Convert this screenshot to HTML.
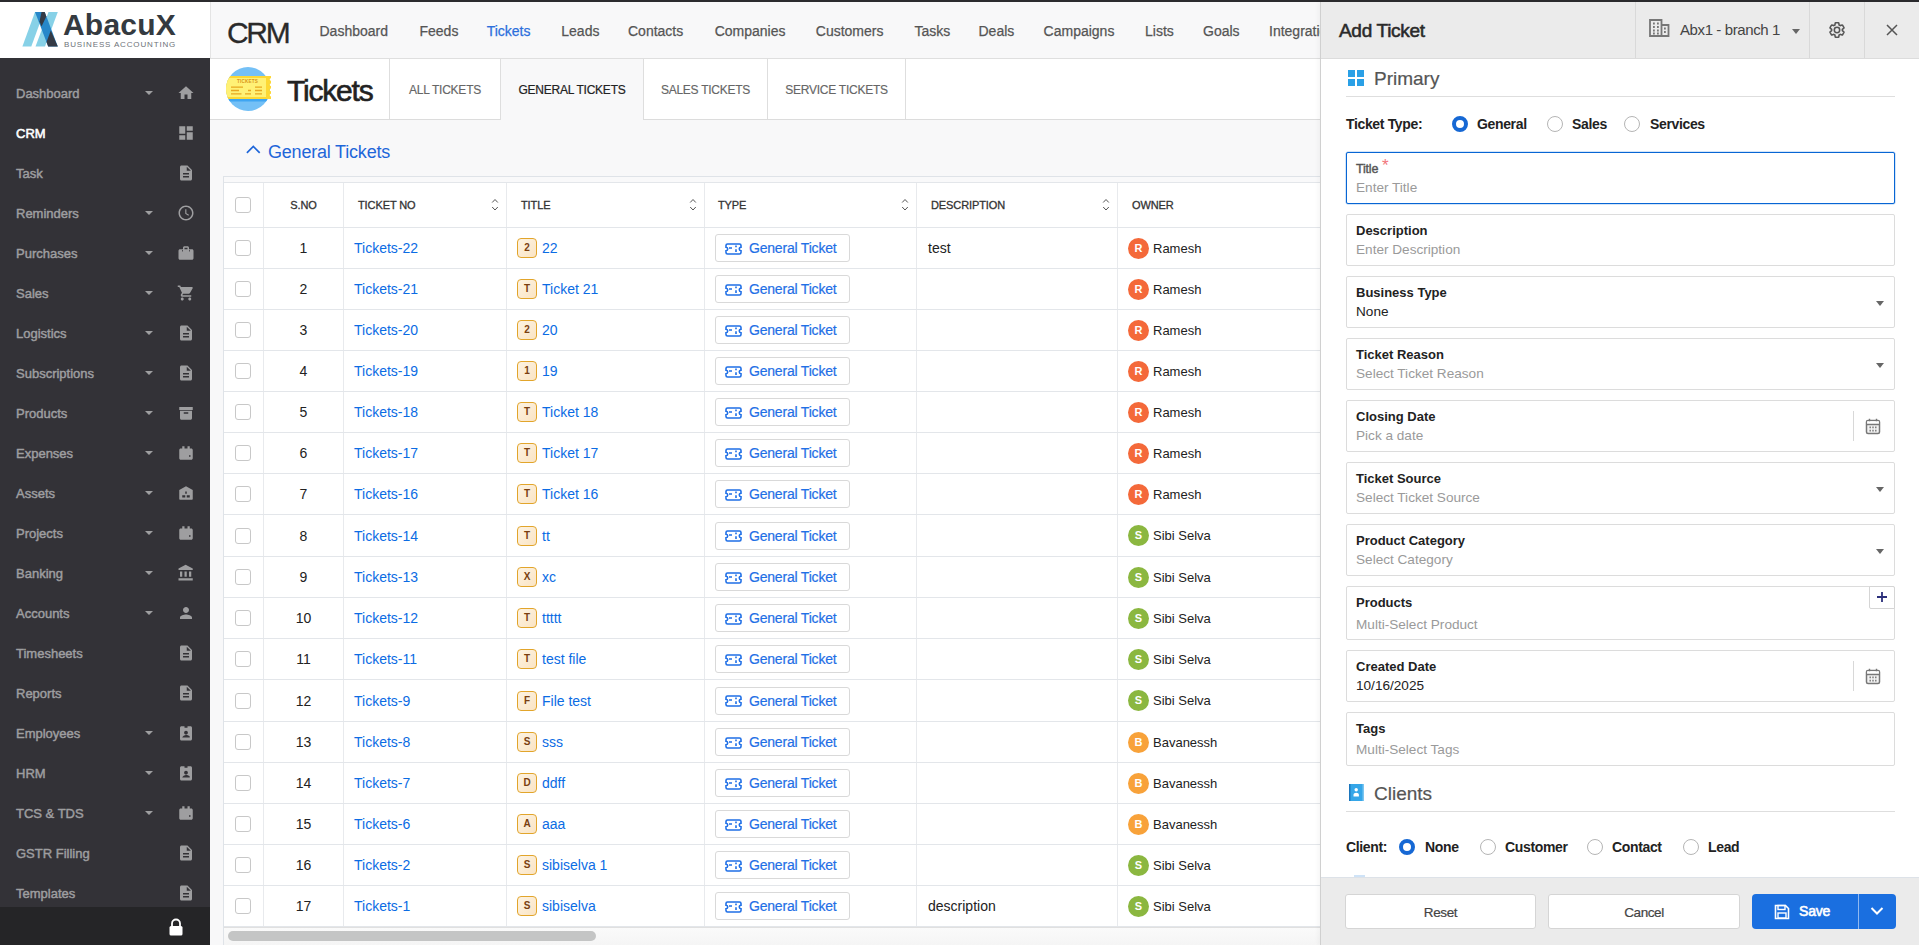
<!DOCTYPE html>
<html><head><meta charset="utf-8">
<style>
*{box-sizing:border-box;margin:0;padding:0}
html,body{width:1919px;height:945px;overflow:hidden;font-family:"Liberation Sans",sans-serif;background:#f8f8f9;color:#222;position:relative}
i{font-style:normal}
.a{position:absolute}
#topbar{left:0;top:0;width:1919px;height:2px;background:#2b2b2e}
#logo{left:0;top:2px;width:210px;height:56px;background:#fff}
#side{left:0;top:58px;width:210px;height:849px;background:#333237}
#sidefoot{left:0;top:907px;width:210px;height:38px;background:#252527}
.si{position:absolute;left:16px;height:20px;width:180px;font-size:13px;color:#9e9ea0;letter-spacing:0px;-webkit-text-stroke:0.45px #9e9ea0}
.si.act{color:#fff;-webkit-text-stroke:0.55px #fff}
.si .t{position:absolute;left:0;top:3px;line-height:15px}
.si .car{position:absolute;left:129px;top:8px;width:0;height:0;border-left:4px solid transparent;border-right:4px solid transparent;border-top:4px solid #9e9ea0}
.si svg{position:absolute;left:161px;top:1px;width:18px;height:18px;fill:#9e9ea0}
#nav{left:210px;top:2px;width:1110px;height:57px;background:#f8f8f9;border-bottom:1px solid #dfdfdf;box-shadow:inset 1px 0 0 #e4e4e4}
#nav .crm{position:absolute;left:17px;top:15px;font-size:30px;letter-spacing:-2.3px;color:#2a2a2a;line-height:32px;-webkit-text-stroke:0.3px #2a2a2a}
#nav .ni{position:absolute;top:21px;font-size:14px;color:#555;line-height:16px;white-space:nowrap;-webkit-text-stroke:0.25px #555}
#nav .ni.on{color:#2c6fdc;-webkit-text-stroke:0.25px #2c6fdc}
#phead{left:210px;top:59px;width:1110px;height:61px;background:#fff;border-bottom:1px solid #dcdcdc}
#phead .ttl{position:absolute;left:77px;top:15px;font-size:30px;color:#222;line-height:34px;letter-spacing:-1.2px;-webkit-text-stroke:0.6px #222}
#phead .tab{position:absolute;top:0;height:60px;border-left:1px solid #dedede;font-size:12px;color:#666;line-height:63px;text-align:center;letter-spacing:-0.25px;-webkit-text-stroke:0.15px #666}
#phead .tab.on{background:#f8f8f9;height:61px;color:#222;-webkit-text-stroke:0.2px #222}
#gt{left:246px;top:142px;font-size:18px;letter-spacing:-0.2px;color:#1e66d9;line-height:20px}
#gt svg{position:absolute;left:0;top:2px}
#gt span{position:absolute;left:22px;top:0;white-space:nowrap}
#tbl{left:223px;top:176px;width:1100px;height:775px;background:#fff;border:1px solid #dfe3e8;border-right:none;overflow:hidden}
#tbl .strip{position:absolute;left:0;top:0;width:100%;height:6px;background:#f9f9fa;border-bottom:1px solid #e3e6ea}
.th{position:absolute;left:0;top:6px;height:45px;width:1100px;border-bottom:1px solid #e3e6ea;font-size:11px;color:#333;letter-spacing:-0.1px;-webkit-text-stroke:0.3px #333}
.tr{position:absolute;left:0;width:1100px;height:41.12px;border-bottom:1px solid #e3e6ea;font-size:14px;color:#222}
.th>div,.tr>div{position:absolute;top:0;height:100%;border-right:1px solid #e8eaed;display:flex;align-items:center}
.c0{left:0;width:40px;padding-left:11px}
.c1{left:40px;width:80px;justify-content:center}
.c2{left:120px;width:163px;padding-left:10px}
.c3{left:283px;width:198px;padding-left:10px}
.c4{left:481px;width:212px;padding-left:10px}
.c5{left:693px;width:201px;padding-left:11px}
.c6{left:894px;width:300px;padding-left:9px;border-right:none!important}
.th .c2,.th .c3,.th .c4,.th .c5,.th .c6{padding-left:14px}
.th .c4{padding-left:13px}
.cb{display:block;width:16px;height:16px;border:1.3px solid #c8c8c8;border-radius:3px;background:#fff}
.tr .c2{color:#0b6ce4}
.tr .c3{color:#0b6ce4}
.bdg{display:inline-block;width:20px;height:20px;border:1.5px solid #e2a52b;border-radius:4px;background:linear-gradient(135deg,#fdf3e3,#fae4c4);color:#7a3f10;font-size:10px;font-weight:bold;text-align:center;line-height:17px;margin-right:5px}
.chip{display:inline-flex;align-items:center;height:28px;width:135px;border:1px solid #d9d9d9;border-radius:3px;padding-left:9px;color:#1f6fe6;font-size:14px;letter-spacing:-0.2px;-webkit-text-stroke:0.2px #1f6fe6}
.chip svg{width:17px;height:12px;margin-right:7px;margin-top:1px}
.av{display:inline-block;width:21px;height:21px;border-radius:50%;color:#fff;font-size:11px;font-weight:bold;text-align:center;line-height:21px;margin-right:4px;margin-left:1px}
.tr .c6{font-size:13px}
.sort{position:absolute;right:7px;top:15px;width:8px;height:14px}
#hscroll{left:228px;top:931px;width:368px;height:10px;border-radius:5px;background:#c4c5c5}
/* panel */
#panel{left:1320px;top:2px;width:599px;height:943px;background:#fff;border-left:1px solid #d0d0d0;box-shadow:-2px 0 4px rgba(0,0,0,0.04)}
#phd{left:0;top:0;width:599px;height:57px;background:#ebebeb;border-bottom:1px solid #dcdcdc}
#phd .at{position:absolute;left:18px;top:19px;font-size:19px;color:#2a2a2a;letter-spacing:-0.3px;line-height:20px;-webkit-text-stroke:0.55px #2a2a2a}
#phd .dv{position:absolute;top:0;width:1px;height:56px;background:#d9d9d9}
#phd .br{position:absolute;left:359px;top:19px;font-size:15px;color:#444;line-height:18px;white-space:nowrap;letter-spacing:-0.4px}
.sec{position:absolute;left:25px;width:549px;height:40px;border-bottom:1px solid #dedede}
.sec span{position:absolute;left:28px;top:11px;font-size:19px;color:#555;line-height:22px;-webkit-text-stroke:0.2px #555}
.rl{position:absolute;font-size:14px;font-weight:bold;color:#222;line-height:16px;white-space:nowrap;letter-spacing:-0.35px}
.rd{position:absolute;width:16px;height:16px;border-radius:50%;border:1px solid #b5b5b5;background:#fff;margin-top:1px}
.rd.on{border:4.6px solid #1668d4}
.fld{position:absolute;left:25px;width:549px;height:52px;border:1px solid #dcdcdc;border-radius:2px;background:#fff}
.fld .lb{position:absolute;left:9px;top:8px;font-size:13px;font-weight:bold;color:#222;line-height:15px;white-space:nowrap}
.fld .ph{position:absolute;left:9px;top:27px;font-size:13.6px;color:#9a9a9a;line-height:16px;white-space:nowrap}
.fld .vl{color:#222}
.fld .dd{position:absolute;right:10px;top:24px;width:0;height:0;border-left:4.5px solid transparent;border-right:4.5px solid transparent;border-top:5px solid #666}
.fld .cal{position:absolute;right:0;top:0;width:41px;height:50px;border-left:none}
.fld .cal:before{content:"";position:absolute;left:0;top:10px;width:1px;height:30px;background:#d8d8d8}
#pfoot{left:0;top:875px;width:599px;height:68px;background:#ebebeb;border-top:1px solid #dde2e8}
.btn{position:absolute;top:16px;height:35px;background:#fff;border:1px solid #d5d5d5;border-radius:3px;font-size:13.5px;color:#444;text-align:center;line-height:35px;letter-spacing:-0.4px;-webkit-text-stroke:0.2px #444}

</style></head><body>
<div id="topbar" class="a"></div>
<div id="logo" class="a">
<svg class="a" style="left:18px;top:6px" width="50" height="44" viewBox="0 0 50 44">
<polygon points="4.4,38.6 13.3,38.6 25.9,4 17,4" fill="#87d1e7"/>
<polygon points="17.5,38.6 27,38.6 39.8,4 30.5,4" fill="#87d1e7"/>
<polygon points="17,4 26.7,4 39.8,38.6 30.2,38.6" fill="#2787c9"/>
<polygon points="23.5,4 26.7,4 28.3,8.5 23.5,18.5 21.5,13.5" fill="#343a45"/>
<polygon points="32.8,22.5 39.8,38.6 30.2,38.6 28.5,34" fill="#343a45"/>
</svg>
<div class="a" style="left:63px;top:6px;font-size:30px;font-weight:bold;color:#343a40;letter-spacing:0.2px;line-height:34px">AbacuX</div>
<div class="a" style="left:64px;top:38px;font-size:8px;color:#6d7278;letter-spacing:0.85px;line-height:10px;white-space:nowrap">BUSINESS ACCOUNTING</div>
</div>
<div id="side" class="a"></div>
<div id="sidelist" class="a" style="left:0;top:0">
<div class="si" style="top:83px"><span class="t">Dashboard</span><i class="car"></i><svg viewBox="0 0 24 24"><path d="M10 20v-6h4v6h5v-8h3L12 3 2 12h3v8z"/></svg></div>
<div class="si act" style="top:123px"><span class="t">CRM</span><svg viewBox="0 0 24 24"><path d="M3 13h8V3H3v10zm0 8h8v-6H3v6zm10 0h8V11h-8v10zm0-18v6h8V3h-8z"/></svg></div>
<div class="si" style="top:163px"><span class="t">Task</span><svg viewBox="0 0 24 24"><path d="M14 2H6c-1.1 0-2 .9-2 2v16c0 1.1.9 2 2 2h12c1.1 0 2-.9 2-2V8l-6-6zm2 16H8v-2h8v2zm0-4H8v-2h8v2zm-3-5V3.5L18.5 9H13z"/></svg></div>
<div class="si" style="top:203px"><span class="t">Reminders</span><i class="car"></i><svg viewBox="0 0 24 24"><path d="M12 2C6.5 2 2 6.5 2 12s4.5 10 10 10 10-4.5 10-10S17.5 2 12 2zm0 18c-4.4 0-8-3.6-8-8s3.6-8 8-8 8 3.6 8 8-3.6 8-8 8zm.5-13H11v6l4.2 2.6.8-1.3-3.5-2.1z"/></svg></div>
<div class="si" style="top:243px"><span class="t">Purchases</span><i class="car"></i><svg viewBox="0 0 24 24"><path d="M20 7h-4V5c0-1.1-.9-2-2-2h-4c-1.1 0-2 .9-2 2v2H4c-1.1 0-2 .9-2 2v10c0 1.1.9 2 2 2h16c1.1 0 2-.9 2-2V9c0-1.1-.9-2-2-2zM10 5h4v2h-4V5zm-2 5H7V8h1v2zm9 0h-1V8h1v2z"/></svg></div>
<div class="si" style="top:283px"><span class="t">Sales</span><i class="car"></i><svg viewBox="0 0 24 24"><path d="M7 18c-1.1 0-2 .9-2 2s.9 2 2 2 2-.9 2-2-.9-2-2-2zM1 2v2h2l3.6 7.6-1.4 2.4c-.2.3-.2.6-.2 1 0 1.1.9 2 2 2h12v-2H7.4c-.1 0-.2-.1-.2-.2v-.1l.9-1.7h7.5c.7 0 1.4-.4 1.7-1l3.6-6.5c.1-.2.1-.3.1-.5 0-.6-.4-1-1-1H5.2l-.9-2H1zm16 16c-1.1 0-2 .9-2 2s.9 2 2 2 2-.9 2-2-.9-2-2-2z"/></svg></div>
<div class="si" style="top:323px"><span class="t">Logistics</span><i class="car"></i><svg viewBox="0 0 24 24"><path d="M14 2H6c-1.1 0-2 .9-2 2v16c0 1.1.9 2 2 2h12c1.1 0 2-.9 2-2V8l-6-6zm2 16H8v-2h8v2zm0-4H8v-2h8v2zm-3-5V3.5L18.5 9H13z"/></svg></div>
<div class="si" style="top:363px"><span class="t">Subscriptions</span><i class="car"></i><svg viewBox="0 0 24 24"><path d="M14 2H6c-1.1 0-2 .9-2 2v16c0 1.1.9 2 2 2h12c1.1 0 2-.9 2-2V8l-6-6zm2 16H8v-2h8v2zm0-4H8v-2h8v2zm-3-5V3.5L18.5 9H13z"/></svg></div>
<div class="si" style="top:403px"><span class="t">Products</span><i class="car"></i><svg viewBox="0 0 24 24"><path d="M3 4h18v4H3zM4 9h16v10c0 1.1-.9 2-2 2H6c-1.1 0-2-.9-2-2V9zm5 2v2h6v-2H9z" fill-rule="evenodd"/></svg></div>
<div class="si" style="top:443px"><span class="t">Expenses</span><i class="car"></i><svg viewBox="0 0 24 24"><path d="M5 6h2V3h3v3h4V3h3v3h2c1.1 0 2 .9 2 2v11c0 1.1-.9 2-2 2H5c-1.1 0-2-.9-2-2V8c0-1.1.9-2 2-2zm11 9v2h2v-2h-2z"/></svg></div>
<div class="si" style="top:483px"><span class="t">Assets</span><i class="car"></i><svg viewBox="0 0 24 24"><path d="M12 3l9 5v12c0 .6-.4 1-1 1H4c-.6 0-1-.4-1-1V8l9-5zm-1 7v3h2v-3h-2zm-4 5v3h4v-3H7zm6 0v3h4v-3h-4z"/></svg></div>
<div class="si" style="top:523px"><span class="t">Projects</span><i class="car"></i><svg viewBox="0 0 24 24"><path d="M5 6h2V3h3v3h4V3h3v3h2c1.1 0 2 .9 2 2v11c0 1.1-.9 2-2 2H5c-1.1 0-2-.9-2-2V8c0-1.1.9-2 2-2zm11 9v2h2v-2h-2z"/></svg></div>
<div class="si" style="top:563px"><span class="t">Banking</span><i class="car"></i><svg viewBox="0 0 24 24"><path d="M4 10v7h3v-7H4zm6 0v7h3v-7h-3zM2 22h19v-3H2v3zm14-12v7h3v-7h-3zm-4.5-9L2 6v2h19V6l-9.5-5z"/></svg></div>
<div class="si" style="top:603px"><span class="t">Accounts</span><i class="car"></i><svg viewBox="0 0 24 24"><path d="M12 12c2.2 0 4-1.8 4-4s-1.8-4-4-4-4 1.8-4 4 1.8 4 4 4zm0 2c-2.7 0-8 1.3-8 4v2h16v-2c0-2.7-5.3-4-8-4z"/></svg></div>
<div class="si" style="top:643px"><span class="t">Timesheets</span><svg viewBox="0 0 24 24"><path d="M14 2H6c-1.1 0-2 .9-2 2v16c0 1.1.9 2 2 2h12c1.1 0 2-.9 2-2V8l-6-6zm2 16H8v-2h8v2zm0-4H8v-2h8v2zm-3-5V3.5L18.5 9H13z"/></svg></div>
<div class="si" style="top:683px"><span class="t">Reports</span><svg viewBox="0 0 24 24"><path d="M14 2H6c-1.1 0-2 .9-2 2v16c0 1.1.9 2 2 2h12c1.1 0 2-.9 2-2V8l-6-6zm2 16H8v-2h8v2zm0-4H8v-2h8v2zm-3-5V3.5L18.5 9H13z"/></svg></div>
<div class="si" style="top:723px"><span class="t">Employees</span><i class="car"></i><svg viewBox="0 0 24 24"><path d="M6 3h4v2h4V3h4c1.1 0 2 .9 2 2v15c0 1.1-.9 2-2 2H6c-1.1 0-2-.9-2-2V5c0-1.1.9-2 2-2zm6 6c-1.4 0-2.5 1.1-2.5 2.5S10.6 14 12 14s2.5-1.1 2.5-2.5S13.4 9 12 9zm-5 9h10v-1c0-1.7-3.3-2.5-5-2.5S7 16.3 7 18v1z"/></svg></div>
<div class="si" style="top:763px"><span class="t">HRM</span><i class="car"></i><svg viewBox="0 0 24 24"><path d="M6 3h4v2h4V3h4c1.1 0 2 .9 2 2v15c0 1.1-.9 2-2 2H6c-1.1 0-2-.9-2-2V5c0-1.1.9-2 2-2zm6 6c-1.4 0-2.5 1.1-2.5 2.5S10.6 14 12 14s2.5-1.1 2.5-2.5S13.4 9 12 9zm-5 9h10v-1c0-1.7-3.3-2.5-5-2.5S7 16.3 7 18v1z"/></svg></div>
<div class="si" style="top:803px"><span class="t">TCS &amp; TDS</span><i class="car"></i><svg viewBox="0 0 24 24"><path d="M5 6h2V3h3v3h4V3h3v3h2c1.1 0 2 .9 2 2v11c0 1.1-.9 2-2 2H5c-1.1 0-2-.9-2-2V8c0-1.1.9-2 2-2zm11 9v2h2v-2h-2z"/></svg></div>
<div class="si" style="top:843px"><span class="t">GSTR Filling</span><svg viewBox="0 0 24 24"><path d="M14 2H6c-1.1 0-2 .9-2 2v16c0 1.1.9 2 2 2h12c1.1 0 2-.9 2-2V8l-6-6zm2 16H8v-2h8v2zm0-4H8v-2h8v2zm-3-5V3.5L18.5 9H13z"/></svg></div>
<div class="si" style="top:883px"><span class="t">Templates</span><svg viewBox="0 0 24 24"><path d="M14 2H6c-1.1 0-2 .9-2 2v16c0 1.1.9 2 2 2h12c1.1 0 2-.9 2-2V8l-6-6zm2 16H8v-2h8v2zm0-4H8v-2h8v2zm-3-5V3.5L18.5 9H13z"/></svg></div>
</div>
<div id="sidefoot" class="a"><svg class="a" style="left:168px;top:11px" width="16" height="18" viewBox="0 0 16 18"><path d="M4 8V5.5a4 4 0 0 1 8 0V8" fill="none" stroke="#fff" stroke-width="1.8"/><rect x="1.5" y="8" width="13" height="9.5" rx="1.5" fill="#fff"/></svg></div>

<div id="nav" class="a">
<div class="crm">CRM</div>
<div class="ni" style="left:109.5px">Dashboard</div>
<div class="ni" style="left:209.5px">Feeds</div>
<div class="ni on" style="left:276.7px">Tickets</div>
<div class="ni" style="left:351.3px">Leads</div>
<div class="ni" style="left:418px">Contacts</div>
<div class="ni" style="left:504.7px">Companies</div>
<div class="ni" style="left:605.8px">Customers</div>
<div class="ni" style="left:704.5px">Tasks</div>
<div class="ni" style="left:768.5px">Deals</div>
<div class="ni" style="left:833.6px">Campaigns</div>
<div class="ni" style="left:935px">Lists</div>
<div class="ni" style="left:993px">Goals</div>
<div class="ni" style="left:1059px">Integrations</div>
</div>

<div id="phead" class="a">
<svg class="a" style="left:12px;top:4px" width="54" height="52" viewBox="0 0 54 52">
<defs><clipPath id="cc"><circle cx="26" cy="26" r="22"/></clipPath><clipPath id="tc"><path d="M0 0h26v52H0z"/><circle cx="26" cy="26" r="22"/></clipPath></defs>
<circle cx="26" cy="26" r="22" fill="#74c0f6"/>
<rect x="0" y="35.5" width="54" height="3" fill="#3fa5f2" clip-path="url(#cc)"/>
<g clip-path="url(#cc)"><rect x="0" y="13" width="30" height="23" fill="#fdd835"/><rect x="0" y="15" width="30" height="19" fill="#fff176"/></g>
<path d="M26 13h23v2.2a1.3 1.3 0 0 0 0 2.6v2.6a1.3 1.3 0 0 0 0 2.6v2.6a1.3 1.3 0 0 0 0 2.6v2.6a1.3 1.3 0 0 0 0 2.6V36H26z" fill="#fdd835"/>
<path d="M26 15h18v19H26z" fill="#fff176"/>
<text x="25.5" y="19.8" font-size="4.6" font-weight="bold" fill="#d9941a" text-anchor="middle" font-family="Liberation Sans" letter-spacing="0.2">TICKETS</text>
<path d="M9 24.2h12M9 27.5h8M9 30.9h10.5M33 24.2h7M33 27.5h7M26 27.5h3M23 30.9h6M33 30.9h7" stroke="#e8a820" stroke-width="1.3"/>
</svg>
<div class="ttl">Tickets</div>
<div class="tab" style="left:179px;width:111px">ALL TICKETS</div>
<div class="tab on" style="left:290px;width:143px">GENERAL TICKETS</div>
<div class="tab" style="left:433px;width:124px">SALES TICKETS</div>
<div class="tab" style="left:557px;width:139px;border-right:1px solid #dedede">SERVICE TICKETS</div>
</div>

<div id="gt" class="a"><svg width="16" height="12" viewBox="0 0 16 12"><path d="M0.9 8.8L7.3 2.4l6.4 6.4" fill="none" stroke="#1e66d9" stroke-width="1.7"/></svg><span>General Tickets</span></div>

<div id="tbl" class="a">
<div class="strip"></div>
<div class="th">
<div class="c0"><i class="cb"></i></div>
<div class="c1">S.NO</div>
<div class="c2">TICKET NO<svg class="sort" viewBox="0 0 8 14"><path d="M1.2 4.5l2.8-3 2.8 3M1.2 9l2.8 3 2.8-3" fill="none" stroke="#555" stroke-width="1"/></svg></div>
<div class="c3">TITLE<svg class="sort" viewBox="0 0 8 14"><path d="M1.2 4.5l2.8-3 2.8 3M1.2 9l2.8 3 2.8-3" fill="none" stroke="#555" stroke-width="1"/></svg></div>
<div class="c4">TYPE<svg class="sort" viewBox="0 0 8 14"><path d="M1.2 4.5l2.8-3 2.8 3M1.2 9l2.8 3 2.8-3" fill="none" stroke="#555" stroke-width="1"/></svg></div>
<div class="c5">DESCRIPTION<svg class="sort" viewBox="0 0 8 14"><path d="M1.2 4.5l2.8-3 2.8 3M1.2 9l2.8 3 2.8-3" fill="none" stroke="#555" stroke-width="1"/></svg></div>
<div class="c6">OWNER</div>
</div>
<div class="tr" style="top:51px;height:41px"><div class="c0"><i class="cb"></i></div><div class="c1">1</div><div class="c2">Tickets-22</div><div class="c3"><i class="bdg">2</i>22</div><div class="c4"><span class="chip"><svg viewBox="0 0 17 12"><path d="M2.5 1H14.5A1.5 1.5 0 0 1 16 2.5V4.3A1.7 1.7 0 0 0 16 7.7V9.5A1.5 1.5 0 0 1 14.5 11H2.5A1.5 1.5 0 0 1 1 9.5V7.7A1.7 1.7 0 0 0 1 4.3V2.5A1.5 1.5 0 0 1 2.5 1Z" fill="none" stroke="#1f6fe6" stroke-width="1.6"/><path d="M4 5h3M11 2.5v1.7M11 6.3v2.7" stroke="#1f6fe6" stroke-width="1.6" fill="none"/></svg>General Ticket</span></div><div class="c5">test</div><div class="c6"><i class="av" style="background:#f4693a">R</i>Ramesh</div></div>
<div class="tr" style="top:92px;height:41px"><div class="c0"><i class="cb"></i></div><div class="c1">2</div><div class="c2">Tickets-21</div><div class="c3"><i class="bdg">T</i>Ticket 21</div><div class="c4"><span class="chip"><svg viewBox="0 0 17 12"><path d="M2.5 1H14.5A1.5 1.5 0 0 1 16 2.5V4.3A1.7 1.7 0 0 0 16 7.7V9.5A1.5 1.5 0 0 1 14.5 11H2.5A1.5 1.5 0 0 1 1 9.5V7.7A1.7 1.7 0 0 0 1 4.3V2.5A1.5 1.5 0 0 1 2.5 1Z" fill="none" stroke="#1f6fe6" stroke-width="1.6"/><path d="M4 5h3M11 2.5v1.7M11 6.3v2.7" stroke="#1f6fe6" stroke-width="1.6" fill="none"/></svg>General Ticket</span></div><div class="c5"></div><div class="c6"><i class="av" style="background:#f4693a">R</i>Ramesh</div></div>
<div class="tr" style="top:133px;height:41px"><div class="c0"><i class="cb"></i></div><div class="c1">3</div><div class="c2">Tickets-20</div><div class="c3"><i class="bdg">2</i>20</div><div class="c4"><span class="chip"><svg viewBox="0 0 17 12"><path d="M2.5 1H14.5A1.5 1.5 0 0 1 16 2.5V4.3A1.7 1.7 0 0 0 16 7.7V9.5A1.5 1.5 0 0 1 14.5 11H2.5A1.5 1.5 0 0 1 1 9.5V7.7A1.7 1.7 0 0 0 1 4.3V2.5A1.5 1.5 0 0 1 2.5 1Z" fill="none" stroke="#1f6fe6" stroke-width="1.6"/><path d="M4 5h3M11 2.5v1.7M11 6.3v2.7" stroke="#1f6fe6" stroke-width="1.6" fill="none"/></svg>General Ticket</span></div><div class="c5"></div><div class="c6"><i class="av" style="background:#f4693a">R</i>Ramesh</div></div>
<div class="tr" style="top:174px;height:41px"><div class="c0"><i class="cb"></i></div><div class="c1">4</div><div class="c2">Tickets-19</div><div class="c3"><i class="bdg">1</i>19</div><div class="c4"><span class="chip"><svg viewBox="0 0 17 12"><path d="M2.5 1H14.5A1.5 1.5 0 0 1 16 2.5V4.3A1.7 1.7 0 0 0 16 7.7V9.5A1.5 1.5 0 0 1 14.5 11H2.5A1.5 1.5 0 0 1 1 9.5V7.7A1.7 1.7 0 0 0 1 4.3V2.5A1.5 1.5 0 0 1 2.5 1Z" fill="none" stroke="#1f6fe6" stroke-width="1.6"/><path d="M4 5h3M11 2.5v1.7M11 6.3v2.7" stroke="#1f6fe6" stroke-width="1.6" fill="none"/></svg>General Ticket</span></div><div class="c5"></div><div class="c6"><i class="av" style="background:#f4693a">R</i>Ramesh</div></div>
<div class="tr" style="top:215px;height:41px"><div class="c0"><i class="cb"></i></div><div class="c1">5</div><div class="c2">Tickets-18</div><div class="c3"><i class="bdg">T</i>Ticket 18</div><div class="c4"><span class="chip"><svg viewBox="0 0 17 12"><path d="M2.5 1H14.5A1.5 1.5 0 0 1 16 2.5V4.3A1.7 1.7 0 0 0 16 7.7V9.5A1.5 1.5 0 0 1 14.5 11H2.5A1.5 1.5 0 0 1 1 9.5V7.7A1.7 1.7 0 0 0 1 4.3V2.5A1.5 1.5 0 0 1 2.5 1Z" fill="none" stroke="#1f6fe6" stroke-width="1.6"/><path d="M4 5h3M11 2.5v1.7M11 6.3v2.7" stroke="#1f6fe6" stroke-width="1.6" fill="none"/></svg>General Ticket</span></div><div class="c5"></div><div class="c6"><i class="av" style="background:#f4693a">R</i>Ramesh</div></div>
<div class="tr" style="top:256px;height:41px"><div class="c0"><i class="cb"></i></div><div class="c1">6</div><div class="c2">Tickets-17</div><div class="c3"><i class="bdg">T</i>Ticket 17</div><div class="c4"><span class="chip"><svg viewBox="0 0 17 12"><path d="M2.5 1H14.5A1.5 1.5 0 0 1 16 2.5V4.3A1.7 1.7 0 0 0 16 7.7V9.5A1.5 1.5 0 0 1 14.5 11H2.5A1.5 1.5 0 0 1 1 9.5V7.7A1.7 1.7 0 0 0 1 4.3V2.5A1.5 1.5 0 0 1 2.5 1Z" fill="none" stroke="#1f6fe6" stroke-width="1.6"/><path d="M4 5h3M11 2.5v1.7M11 6.3v2.7" stroke="#1f6fe6" stroke-width="1.6" fill="none"/></svg>General Ticket</span></div><div class="c5"></div><div class="c6"><i class="av" style="background:#f4693a">R</i>Ramesh</div></div>
<div class="tr" style="top:297px;height:41px"><div class="c0"><i class="cb"></i></div><div class="c1">7</div><div class="c2">Tickets-16</div><div class="c3"><i class="bdg">T</i>Ticket 16</div><div class="c4"><span class="chip"><svg viewBox="0 0 17 12"><path d="M2.5 1H14.5A1.5 1.5 0 0 1 16 2.5V4.3A1.7 1.7 0 0 0 16 7.7V9.5A1.5 1.5 0 0 1 14.5 11H2.5A1.5 1.5 0 0 1 1 9.5V7.7A1.7 1.7 0 0 0 1 4.3V2.5A1.5 1.5 0 0 1 2.5 1Z" fill="none" stroke="#1f6fe6" stroke-width="1.6"/><path d="M4 5h3M11 2.5v1.7M11 6.3v2.7" stroke="#1f6fe6" stroke-width="1.6" fill="none"/></svg>General Ticket</span></div><div class="c5"></div><div class="c6"><i class="av" style="background:#f4693a">R</i>Ramesh</div></div>
<div class="tr" style="top:338px;height:42px"><div class="c0"><i class="cb"></i></div><div class="c1">8</div><div class="c2">Tickets-14</div><div class="c3"><i class="bdg">T</i>tt</div><div class="c4"><span class="chip"><svg viewBox="0 0 17 12"><path d="M2.5 1H14.5A1.5 1.5 0 0 1 16 2.5V4.3A1.7 1.7 0 0 0 16 7.7V9.5A1.5 1.5 0 0 1 14.5 11H2.5A1.5 1.5 0 0 1 1 9.5V7.7A1.7 1.7 0 0 0 1 4.3V2.5A1.5 1.5 0 0 1 2.5 1Z" fill="none" stroke="#1f6fe6" stroke-width="1.6"/><path d="M4 5h3M11 2.5v1.7M11 6.3v2.7" stroke="#1f6fe6" stroke-width="1.6" fill="none"/></svg>General Ticket</span></div><div class="c5"></div><div class="c6"><i class="av" style="background:#8bb740">S</i>Sibi Selva</div></div>
<div class="tr" style="top:380px;height:41px"><div class="c0"><i class="cb"></i></div><div class="c1">9</div><div class="c2">Tickets-13</div><div class="c3"><i class="bdg">X</i>xc</div><div class="c4"><span class="chip"><svg viewBox="0 0 17 12"><path d="M2.5 1H14.5A1.5 1.5 0 0 1 16 2.5V4.3A1.7 1.7 0 0 0 16 7.7V9.5A1.5 1.5 0 0 1 14.5 11H2.5A1.5 1.5 0 0 1 1 9.5V7.7A1.7 1.7 0 0 0 1 4.3V2.5A1.5 1.5 0 0 1 2.5 1Z" fill="none" stroke="#1f6fe6" stroke-width="1.6"/><path d="M4 5h3M11 2.5v1.7M11 6.3v2.7" stroke="#1f6fe6" stroke-width="1.6" fill="none"/></svg>General Ticket</span></div><div class="c5"></div><div class="c6"><i class="av" style="background:#8bb740">S</i>Sibi Selva</div></div>
<div class="tr" style="top:421px;height:41px"><div class="c0"><i class="cb"></i></div><div class="c1">10</div><div class="c2">Tickets-12</div><div class="c3"><i class="bdg">T</i>ttttt</div><div class="c4"><span class="chip"><svg viewBox="0 0 17 12"><path d="M2.5 1H14.5A1.5 1.5 0 0 1 16 2.5V4.3A1.7 1.7 0 0 0 16 7.7V9.5A1.5 1.5 0 0 1 14.5 11H2.5A1.5 1.5 0 0 1 1 9.5V7.7A1.7 1.7 0 0 0 1 4.3V2.5A1.5 1.5 0 0 1 2.5 1Z" fill="none" stroke="#1f6fe6" stroke-width="1.6"/><path d="M4 5h3M11 2.5v1.7M11 6.3v2.7" stroke="#1f6fe6" stroke-width="1.6" fill="none"/></svg>General Ticket</span></div><div class="c5"></div><div class="c6"><i class="av" style="background:#8bb740">S</i>Sibi Selva</div></div>
<div class="tr" style="top:462px;height:41px"><div class="c0"><i class="cb"></i></div><div class="c1">11</div><div class="c2">Tickets-11</div><div class="c3"><i class="bdg">T</i>test file</div><div class="c4"><span class="chip"><svg viewBox="0 0 17 12"><path d="M2.5 1H14.5A1.5 1.5 0 0 1 16 2.5V4.3A1.7 1.7 0 0 0 16 7.7V9.5A1.5 1.5 0 0 1 14.5 11H2.5A1.5 1.5 0 0 1 1 9.5V7.7A1.7 1.7 0 0 0 1 4.3V2.5A1.5 1.5 0 0 1 2.5 1Z" fill="none" stroke="#1f6fe6" stroke-width="1.6"/><path d="M4 5h3M11 2.5v1.7M11 6.3v2.7" stroke="#1f6fe6" stroke-width="1.6" fill="none"/></svg>General Ticket</span></div><div class="c5"></div><div class="c6"><i class="av" style="background:#8bb740">S</i>Sibi Selva</div></div>
<div class="tr" style="top:503px;height:42px"><div class="c0"><i class="cb"></i></div><div class="c1">12</div><div class="c2">Tickets-9</div><div class="c3"><i class="bdg">F</i>File test</div><div class="c4"><span class="chip"><svg viewBox="0 0 17 12"><path d="M2.5 1H14.5A1.5 1.5 0 0 1 16 2.5V4.3A1.7 1.7 0 0 0 16 7.7V9.5A1.5 1.5 0 0 1 14.5 11H2.5A1.5 1.5 0 0 1 1 9.5V7.7A1.7 1.7 0 0 0 1 4.3V2.5A1.5 1.5 0 0 1 2.5 1Z" fill="none" stroke="#1f6fe6" stroke-width="1.6"/><path d="M4 5h3M11 2.5v1.7M11 6.3v2.7" stroke="#1f6fe6" stroke-width="1.6" fill="none"/></svg>General Ticket</span></div><div class="c5"></div><div class="c6"><i class="av" style="background:#8bb740">S</i>Sibi Selva</div></div>
<div class="tr" style="top:545px;height:41px"><div class="c0"><i class="cb"></i></div><div class="c1">13</div><div class="c2">Tickets-8</div><div class="c3"><i class="bdg">S</i>sss</div><div class="c4"><span class="chip"><svg viewBox="0 0 17 12"><path d="M2.5 1H14.5A1.5 1.5 0 0 1 16 2.5V4.3A1.7 1.7 0 0 0 16 7.7V9.5A1.5 1.5 0 0 1 14.5 11H2.5A1.5 1.5 0 0 1 1 9.5V7.7A1.7 1.7 0 0 0 1 4.3V2.5A1.5 1.5 0 0 1 2.5 1Z" fill="none" stroke="#1f6fe6" stroke-width="1.6"/><path d="M4 5h3M11 2.5v1.7M11 6.3v2.7" stroke="#1f6fe6" stroke-width="1.6" fill="none"/></svg>General Ticket</span></div><div class="c5"></div><div class="c6"><i class="av" style="background:#f8a23a">B</i>Bavanessh</div></div>
<div class="tr" style="top:586px;height:41px"><div class="c0"><i class="cb"></i></div><div class="c1">14</div><div class="c2">Tickets-7</div><div class="c3"><i class="bdg">D</i>ddff</div><div class="c4"><span class="chip"><svg viewBox="0 0 17 12"><path d="M2.5 1H14.5A1.5 1.5 0 0 1 16 2.5V4.3A1.7 1.7 0 0 0 16 7.7V9.5A1.5 1.5 0 0 1 14.5 11H2.5A1.5 1.5 0 0 1 1 9.5V7.7A1.7 1.7 0 0 0 1 4.3V2.5A1.5 1.5 0 0 1 2.5 1Z" fill="none" stroke="#1f6fe6" stroke-width="1.6"/><path d="M4 5h3M11 2.5v1.7M11 6.3v2.7" stroke="#1f6fe6" stroke-width="1.6" fill="none"/></svg>General Ticket</span></div><div class="c5"></div><div class="c6"><i class="av" style="background:#f8a23a">B</i>Bavanessh</div></div>
<div class="tr" style="top:627px;height:41px"><div class="c0"><i class="cb"></i></div><div class="c1">15</div><div class="c2">Tickets-6</div><div class="c3"><i class="bdg">A</i>aaa</div><div class="c4"><span class="chip"><svg viewBox="0 0 17 12"><path d="M2.5 1H14.5A1.5 1.5 0 0 1 16 2.5V4.3A1.7 1.7 0 0 0 16 7.7V9.5A1.5 1.5 0 0 1 14.5 11H2.5A1.5 1.5 0 0 1 1 9.5V7.7A1.7 1.7 0 0 0 1 4.3V2.5A1.5 1.5 0 0 1 2.5 1Z" fill="none" stroke="#1f6fe6" stroke-width="1.6"/><path d="M4 5h3M11 2.5v1.7M11 6.3v2.7" stroke="#1f6fe6" stroke-width="1.6" fill="none"/></svg>General Ticket</span></div><div class="c5"></div><div class="c6"><i class="av" style="background:#f8a23a">B</i>Bavanessh</div></div>
<div class="tr" style="top:668px;height:41px"><div class="c0"><i class="cb"></i></div><div class="c1">16</div><div class="c2">Tickets-2</div><div class="c3"><i class="bdg">S</i>sibiselva 1</div><div class="c4"><span class="chip"><svg viewBox="0 0 17 12"><path d="M2.5 1H14.5A1.5 1.5 0 0 1 16 2.5V4.3A1.7 1.7 0 0 0 16 7.7V9.5A1.5 1.5 0 0 1 14.5 11H2.5A1.5 1.5 0 0 1 1 9.5V7.7A1.7 1.7 0 0 0 1 4.3V2.5A1.5 1.5 0 0 1 2.5 1Z" fill="none" stroke="#1f6fe6" stroke-width="1.6"/><path d="M4 5h3M11 2.5v1.7M11 6.3v2.7" stroke="#1f6fe6" stroke-width="1.6" fill="none"/></svg>General Ticket</span></div><div class="c5"></div><div class="c6"><i class="av" style="background:#8bb740">S</i>Sibi Selva</div></div>
<div class="tr" style="top:709px;height:41px"><div class="c0"><i class="cb"></i></div><div class="c1">17</div><div class="c2">Tickets-1</div><div class="c3"><i class="bdg">S</i>sibiselva</div><div class="c4"><span class="chip"><svg viewBox="0 0 17 12"><path d="M2.5 1H14.5A1.5 1.5 0 0 1 16 2.5V4.3A1.7 1.7 0 0 0 16 7.7V9.5A1.5 1.5 0 0 1 14.5 11H2.5A1.5 1.5 0 0 1 1 9.5V7.7A1.7 1.7 0 0 0 1 4.3V2.5A1.5 1.5 0 0 1 2.5 1Z" fill="none" stroke="#1f6fe6" stroke-width="1.6"/><path d="M4 5h3M11 2.5v1.7M11 6.3v2.7" stroke="#1f6fe6" stroke-width="1.6" fill="none"/></svg>General Ticket</span></div><div class="c5">description</div><div class="c6"><i class="av" style="background:#8bb740">S</i>Sibi Selva</div></div>
</div>
<div class="a" style="left:224px;top:927px;width:1096px;height:18px;background:linear-gradient(#fafafa,#f5f5f5);border-top:1px solid #e0e0e0"></div>
<div id="hscroll" class="a"></div>

<div id="panel" class="a">
<div id="phd" class="a">
<div class="at">Add Ticket</div>
<div class="dv" style="left:314px"></div>
<svg class="a" style="left:328px;top:17px" width="21" height="20" viewBox="0 0 21 20"><path d="M1 17V1h11.5v16zM12.5 6h7v11h-7" fill="none" stroke="#777" stroke-width="1.8"/><path d="M4 4.5h1.8M8 4.5h1.8M4 8h1.8M8 8h1.8M4 11.5h1.8M8 11.5h1.8M4 14.5h1.8M8 14.5h1.8M15 9.5h1.8M15 13h1.8" stroke="#777" stroke-width="1.8"/></svg>
<div class="br">Abx1 - branch 1</div>
<div class="a" style="left:471px;top:27px;width:0;height:0;border-left:4.5px solid transparent;border-right:4.5px solid transparent;border-top:5px solid #666"></div>
<div class="dv" style="left:488px"></div>
<svg class="a" style="left:507px;top:19px" width="18" height="18" viewBox="0 0 24 24"><path d="M19.14 12.94c.04-.3.06-.61.06-.94 0-.32-.02-.64-.07-.94l2.03-1.58a.49.49 0 0 0 .12-.61l-1.92-3.32a.488.488 0 0 0-.59-.22l-2.39.96c-.5-.38-1.03-.7-1.62-.94l-.36-2.54a.484.484 0 0 0-.48-.41h-3.84c-.24 0-.43.17-.47.41l-.36 2.54c-.59.24-1.13.57-1.62.94l-2.39-.96c-.22-.08-.47 0-.59.22L2.74 8.87c-.12.21-.08.47.12.61l2.03 1.58c-.05.3-.09.63-.09.94s.02.64.07.94l-2.03 1.58a.49.49 0 0 0-.12.61l1.92 3.32c.12.22.37.29.59.22l2.39-.96c.5.38 1.03.7 1.62.94l.36 2.54c.05.24.24.41.48.41h3.84c.24 0 .44-.17.47-.41l.36-2.54c.59-.24 1.13-.56 1.62-.94l2.39.96c.22.08.47 0 .59-.22l1.92-3.32c.12-.22.07-.47-.12-.61l-2.01-1.58zM12 15.6c-1.98 0-3.6-1.62-3.6-3.6s1.62-3.6 3.6-3.6 3.6 1.62 3.6 3.6-1.62 3.6-3.6 3.6z" fill="none" stroke="#555" stroke-width="2.1"/></svg>
<div class="dv" style="left:543px"></div>
<svg class="a" style="left:565px;top:22px" width="12" height="12" viewBox="0 0 12 12"><path d="M1 1l10 10M11 1L1 11" stroke="#555" stroke-width="1.5"/></svg>
</div>

<div class="sec" style="top:55px"><svg class="a" style="left:2px;top:13px" width="16" height="16" viewBox="0 0 16 16"><rect x="0" y="0" width="7" height="7" fill="#2aa0e6"/><rect x="9" y="0" width="7" height="7" fill="#2aa0e6"/><rect x="0" y="9" width="7" height="7" fill="#2aa0e6"/><rect x="9" y="9" width="7" height="7" fill="#2aa0e6"/></svg><span>Primary</span></div>

<div class="rl" style="left:25px;top:114px">Ticket Type:</div>
<div class="rd on" style="left:131px;top:113px"></div><div class="rl" style="left:156px;top:114px">General</div>
<div class="rd" style="left:226px;top:113px"></div><div class="rl" style="left:251px;top:114px">Sales</div>
<div class="rd" style="left:303px;top:113px"></div><div class="rl" style="left:329px;top:114px">Services</div>

<div class="fld" style="top:150px;border:1px solid #0866d4;box-shadow:0 0 0 0.5px rgba(8,102,212,0.35)"><div class="lb" style="left:9px;top:9px;color:#555;font-size:12.5px;font-weight:normal;-webkit-text-stroke:0.4px #555;letter-spacing:-0.2px">Title<span style="color:#f2767c;font-size:17px;position:absolute;top:-4px;left:26px;-webkit-text-stroke:0">*</span></div><div class="ph" style="left:9px;top:27px">Enter Title</div></div>
<div class="fld" style="top:212px"><div class="lb">Description</div><div class="ph">Enter Description</div></div>
<div class="fld" style="top:274px"><div class="lb">Business Type</div><div class="ph vl">None</div><i class="dd"></i></div>
<div class="fld" style="top:336px"><div class="lb">Ticket Reason</div><div class="ph">Select Ticket Reason</div><i class="dd"></i></div>
<div class="fld" style="top:398px"><div class="lb">Closing Date</div><div class="ph">Pick a date</div><div class="cal"><svg class="a" style="left:12px;top:17px" width="16" height="17" viewBox="0 0 16 17"><rect x="1.5" y="2.5" width="13" height="13" rx="1.5" fill="#f3f3f3" stroke="#777" stroke-width="1.5"/><rect x="2.2" y="3.2" width="11.6" height="2.8" fill="#fff"/><path d="M1.5 6.5h13M4.5 0.8v2.5M11.5 0.8v2.5M5.2 8.5v1.8M8 8.5v1.8M10.8 8.5v1.8M5.2 11.8v1.8M8 11.8v1.8M10.8 11.8v1.8" stroke="#777" stroke-width="1.4"/></svg></div></div>
<div class="fld" style="top:460px"><div class="lb">Ticket Source</div><div class="ph">Select Ticket Source</div><i class="dd"></i></div>
<div class="fld" style="top:522px"><div class="lb">Product Category</div><div class="ph">Select Category</div><i class="dd"></i></div>
<div class="fld" style="top:584px;height:54px"><div class="lb">Products</div><div class="ph" style="top:30px">Multi-Select Product</div><div class="a" style="right:-1px;top:-1px;width:26px;height:23px;border:1px solid #d5d5d5;border-radius:0 2px 0 2px;background:#fff"><svg class="a" style="left:6px;top:4px" width="12" height="12" viewBox="0 0 12 12"><path d="M6 1v10M1 6h10" stroke="#2b2f7a" stroke-width="1.8"/></svg></div></div>
<div class="fld" style="top:648px"><div class="lb">Created Date</div><div class="ph vl">10/16/2025</div><div class="cal"><svg class="a" style="left:12px;top:17px" width="16" height="17" viewBox="0 0 16 17"><rect x="1.5" y="2.5" width="13" height="13" rx="1.5" fill="#f3f3f3" stroke="#777" stroke-width="1.5"/><rect x="2.2" y="3.2" width="11.6" height="2.8" fill="#fff"/><path d="M1.5 6.5h13M4.5 0.8v2.5M11.5 0.8v2.5M5.2 8.5v1.8M8 8.5v1.8M10.8 8.5v1.8M5.2 11.8v1.8M8 11.8v1.8M10.8 11.8v1.8" stroke="#777" stroke-width="1.4"/></svg></div></div>
<div class="fld" style="top:710px;height:54px"><div class="lb">Tags</div><div class="ph" style="top:29px">Multi-Select Tags</div></div>

<div class="sec" style="top:770px"><svg class="a" style="left:3px;top:12px" width="15" height="17" viewBox="0 0 15 17"><rect x="0" y="0" width="15" height="17" fill="#35a6e8"/><rect x="0" y="0" width="1.5" height="17" fill="#1b76bd"/><rect x="13.5" y="0" width="1.5" height="17" fill="#7cc6f0"/><circle cx="7.2" cy="5.8" r="1.7" fill="#fff"/><path d="M4.5 12.5v-1.8c0-1.2 1.2-2 2.7-2s2.7.8 2.7 2v1.8z" fill="#fff"/></svg><span style="top:11px">Clients</span></div>

<div class="rl" style="left:25px;top:837px">Client:</div>
<div class="rd on" style="left:78px;top:836px"></div><div class="rl" style="left:104px;top:837px">None</div>
<div class="rd" style="left:159px;top:836px"></div><div class="rl" style="left:184px;top:837px">Customer</div>
<div class="rd" style="left:266px;top:836px"></div><div class="rl" style="left:291px;top:837px">Contact</div>
<div class="rd" style="left:362px;top:836px"></div><div class="rl" style="left:387px;top:837px">Lead</div>

<div class="a" style="left:33px;top:873px;width:11px;height:2px;background:#cfe3f7"></div>
<div id="pfoot" class="a">
<div class="btn" style="left:24px;width:191px">Reset</div>
<div class="btn" style="left:227px;width:192px">Cancel</div>
<div class="a" style="left:431px;top:16px;width:144px;height:35px;background:#1a6fe0;border-radius:4px"></div>
<div class="a" style="left:537px;top:16px;width:1px;height:35px;background:#8fb8f0"></div>
<svg class="a" style="left:453px;top:26px" width="16" height="16" viewBox="0 0 16 16"><path d="M1.5 1.5h10l3 3v10h-13z" fill="none" stroke="#fff" stroke-width="1.6"/><rect x="4" y="1.5" width="7" height="4" fill="none" stroke="#fff" stroke-width="1.4"/><rect x="4" y="9" width="8" height="5" fill="none" stroke="#fff" stroke-width="1.4"/></svg>
<div class="a" style="left:478px;top:25px;font-size:14px;color:#fff;line-height:16px;-webkit-text-stroke:0.6px #fff;letter-spacing:-0.2px">Save</div>
<svg class="a" style="left:549px;top:28px" width="14" height="10" viewBox="0 0 14 10"><path d="M1.5 2l5.5 5.5L12.5 2" fill="none" stroke="#fff" stroke-width="2"/></svg>
</div>
</div>

</body></html>
